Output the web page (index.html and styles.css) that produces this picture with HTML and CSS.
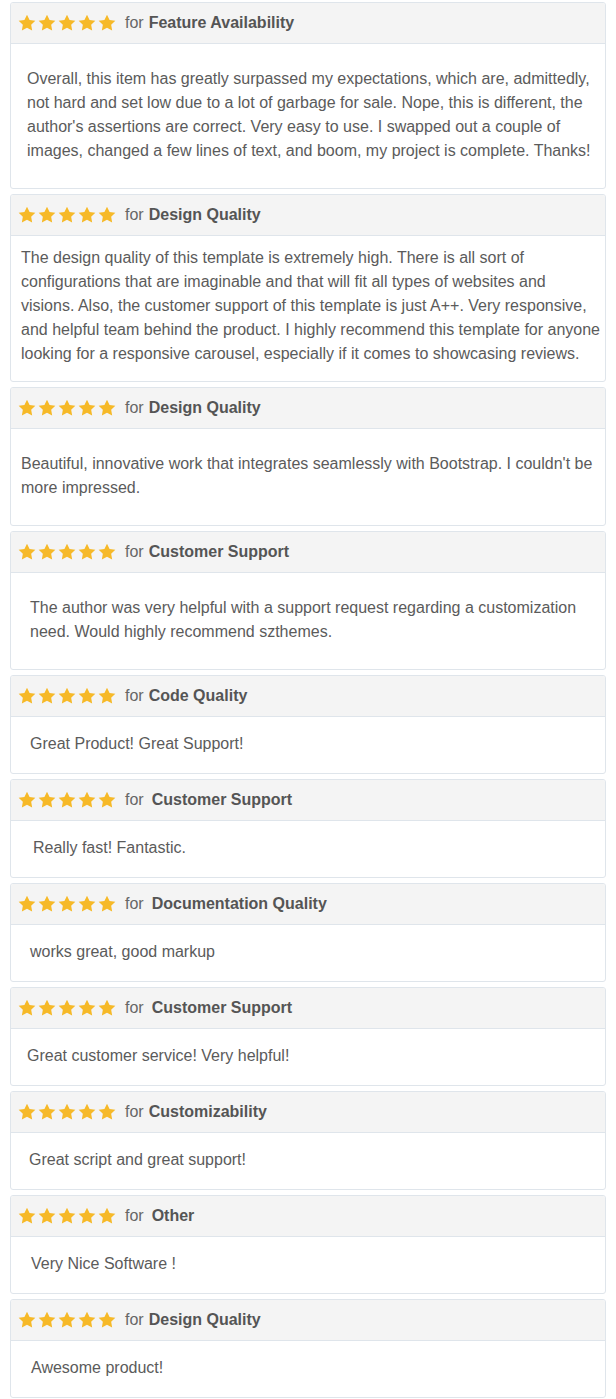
FILE: index.html
```html
<!DOCTYPE html>
<html lang="en">
<head>
<meta charset="utf-8">
<title>Reviews</title>
<link rel="stylesheet" href="styles.css">
</head>
<body>
<svg width="0" height="0" class="defs" aria-hidden="true">
  <defs>
    <path id="star" d="M12 2l3.09 6.26L22 9.27l-5 4.87 1.18 6.88L12 17.77l-6.18 3.25L7 14.14 2 9.27l6.91-1.01L12 2z"/>
  </defs>
</svg>
<div class="reviews">

  <div class="card">
    <div class="card-head"><span class="stars"><svg viewBox="0 0 24 24"><use href="#star"/></svg><svg viewBox="0 0 24 24"><use href="#star"/></svg><svg viewBox="0 0 24 24"><use href="#star"/></svg><svg viewBox="0 0 24 24"><use href="#star"/></svg><svg viewBox="0 0 24 24"><use href="#star"/></svg></span><span class="for">for</span><b class="topic">Feature Availability</b></div>
    <div class="card-body b1">Overall, this item has greatly surpassed my expectations, which are, admittedly, not hard and set low due to a lot of garbage for sale. Nope, this is different, the author's assertions are correct. Very easy to use. I swapped out a couple of images, changed a few lines of text, and boom, my project is complete. Thanks!</div>
  </div>

  <div class="card">
    <div class="card-head"><span class="stars"><svg viewBox="0 0 24 24"><use href="#star"/></svg><svg viewBox="0 0 24 24"><use href="#star"/></svg><svg viewBox="0 0 24 24"><use href="#star"/></svg><svg viewBox="0 0 24 24"><use href="#star"/></svg><svg viewBox="0 0 24 24"><use href="#star"/></svg></span><span class="for">for</span><b class="topic">Design Quality</b></div>
    <div class="card-body b2">The design quality of this template is extremely high. There is all sort of configurations that are imaginable and that will fit all types of websites and visions. Also, the customer support of this template is just A++. Very responsive, and helpful team behind the product. I highly recommend this template for anyone looking for a responsive carousel, especially if it comes to showcasing reviews.</div>
  </div>

  <div class="card">
    <div class="card-head"><span class="stars"><svg viewBox="0 0 24 24"><use href="#star"/></svg><svg viewBox="0 0 24 24"><use href="#star"/></svg><svg viewBox="0 0 24 24"><use href="#star"/></svg><svg viewBox="0 0 24 24"><use href="#star"/></svg><svg viewBox="0 0 24 24"><use href="#star"/></svg></span><span class="for">for</span><b class="topic">Design Quality</b></div>
    <div class="card-body b3">Beautiful, innovative work that integrates seamlessly with Bootstrap. I couldn't be more impressed.</div>
  </div>

  <div class="card">
    <div class="card-head"><span class="stars"><svg viewBox="0 0 24 24"><use href="#star"/></svg><svg viewBox="0 0 24 24"><use href="#star"/></svg><svg viewBox="0 0 24 24"><use href="#star"/></svg><svg viewBox="0 0 24 24"><use href="#star"/></svg><svg viewBox="0 0 24 24"><use href="#star"/></svg></span><span class="for">for</span><b class="topic">Customer Support</b></div>
    <div class="card-body b4">The author was very helpful with a support request regarding a customization need. Would highly recommend szthemes.</div>
  </div>

  <div class="card">
    <div class="card-head"><span class="stars"><svg viewBox="0 0 24 24"><use href="#star"/></svg><svg viewBox="0 0 24 24"><use href="#star"/></svg><svg viewBox="0 0 24 24"><use href="#star"/></svg><svg viewBox="0 0 24 24"><use href="#star"/></svg><svg viewBox="0 0 24 24"><use href="#star"/></svg></span><span class="for">for</span><b class="topic">Code Quality</b></div>
    <div class="card-body one p19">Great Product! Great Support!</div>
  </div>

  <div class="card">
    <div class="card-head"><span class="stars"><svg viewBox="0 0 24 24"><use href="#star"/></svg><svg viewBox="0 0 24 24"><use href="#star"/></svg><svg viewBox="0 0 24 24"><use href="#star"/></svg><svg viewBox="0 0 24 24"><use href="#star"/></svg><svg viewBox="0 0 24 24"><use href="#star"/></svg></span><span class="for">for</span><b class="topic wide">Customer Support</b></div>
    <div class="card-body one p22">Really fast! Fantastic.</div>
  </div>

  <div class="card">
    <div class="card-head"><span class="stars"><svg viewBox="0 0 24 24"><use href="#star"/></svg><svg viewBox="0 0 24 24"><use href="#star"/></svg><svg viewBox="0 0 24 24"><use href="#star"/></svg><svg viewBox="0 0 24 24"><use href="#star"/></svg><svg viewBox="0 0 24 24"><use href="#star"/></svg></span><span class="for">for</span><b class="topic wide">Documentation Quality</b></div>
    <div class="card-body one p19">works great, good markup</div>
  </div>

  <div class="card">
    <div class="card-head"><span class="stars"><svg viewBox="0 0 24 24"><use href="#star"/></svg><svg viewBox="0 0 24 24"><use href="#star"/></svg><svg viewBox="0 0 24 24"><use href="#star"/></svg><svg viewBox="0 0 24 24"><use href="#star"/></svg><svg viewBox="0 0 24 24"><use href="#star"/></svg></span><span class="for">for</span><b class="topic wide">Customer Support</b></div>
    <div class="card-body one p16">Great customer service! Very helpful!</div>
  </div>

  <div class="card">
    <div class="card-head"><span class="stars"><svg viewBox="0 0 24 24"><use href="#star"/></svg><svg viewBox="0 0 24 24"><use href="#star"/></svg><svg viewBox="0 0 24 24"><use href="#star"/></svg><svg viewBox="0 0 24 24"><use href="#star"/></svg><svg viewBox="0 0 24 24"><use href="#star"/></svg></span><span class="for">for</span><b class="topic">Customizability</b></div>
    <div class="card-body one p18">Great script and great support!</div>
  </div>

  <div class="card">
    <div class="card-head"><span class="stars"><svg viewBox="0 0 24 24"><use href="#star"/></svg><svg viewBox="0 0 24 24"><use href="#star"/></svg><svg viewBox="0 0 24 24"><use href="#star"/></svg><svg viewBox="0 0 24 24"><use href="#star"/></svg><svg viewBox="0 0 24 24"><use href="#star"/></svg></span><span class="for">for</span><b class="topic wide">Other</b></div>
    <div class="card-body one p20">Very Nice Software !</div>
  </div>

  <div class="card">
    <div class="card-head"><span class="stars"><svg viewBox="0 0 24 24"><use href="#star"/></svg><svg viewBox="0 0 24 24"><use href="#star"/></svg><svg viewBox="0 0 24 24"><use href="#star"/></svg><svg viewBox="0 0 24 24"><use href="#star"/></svg><svg viewBox="0 0 24 24"><use href="#star"/></svg></span><span class="for">for</span><b class="topic">Design Quality</b></div>
    <div class="card-body one p20">Awesome product!</div>
  </div>

</div>
</body>
</html>
```

FILE: styles.css
```css
html, body {
  margin: 0;
  padding: 0;
  background: #ffffff;
}

body {
  font-family: "Liberation Sans", Arial, sans-serif;
  font-size: 16px;
  color: #5b5b5b;
}

.defs {
  position: absolute;
  width: 0;
  height: 0;
  overflow: hidden;
}

.reviews {
  display: flex;
  flex-direction: column;
  gap: 5px;
  padding: 2px 10px 0 10px;
}

.card {
  border: 1px solid #dfe5eb;
  border-radius: 3px;
  background: #ffffff;
  overflow: hidden;
}

.card-head {
  box-sizing: border-box;
  height: 41px;
  background: #f4f4f4;
  border-bottom: 1px solid #dfe5eb;
  display: flex;
  align-items: center;
  padding: 0 0 0 6px;
  line-height: 20px;
  white-space: nowrap;
  color: #666666;
}

.stars {
  display: inline-flex;
  margin-right: 8px;
}

.stars svg {
  width: 20px;
  height: 20px;
  fill: #f6b928;
  display: block;
}

.for {
  color: #666666;
}

.topic {
  font-weight: bold;
  color: #555555;
  margin-left: 5px;
}

.topic.wide {
  margin-left: 8px;
}

.card-body {
  line-height: 24px;
  padding-right: 6px;
}

.b1 {
  height: 144px;
  box-sizing: border-box;
  padding: 23px 10px 0 16px;
}

.b2 {
  height: 145px;
  box-sizing: border-box;
  padding: 10px 4px 0 10px;
}

.b3 {
  height: 96px;
  box-sizing: border-box;
  padding: 23px 8px 0 10px;
}

.b4 {
  height: 96px;
  box-sizing: border-box;
  padding: 23px 8px 0 19px;
}

.one {
  height: 56px;
  box-sizing: border-box;
  padding-top: 15px;
}

.p16 { padding-left: 16px; }
.p18 { padding-left: 18px; }
.p19 { padding-left: 19px; }
.p20 { padding-left: 20px; }
.p22 { padding-left: 22px; }
```
